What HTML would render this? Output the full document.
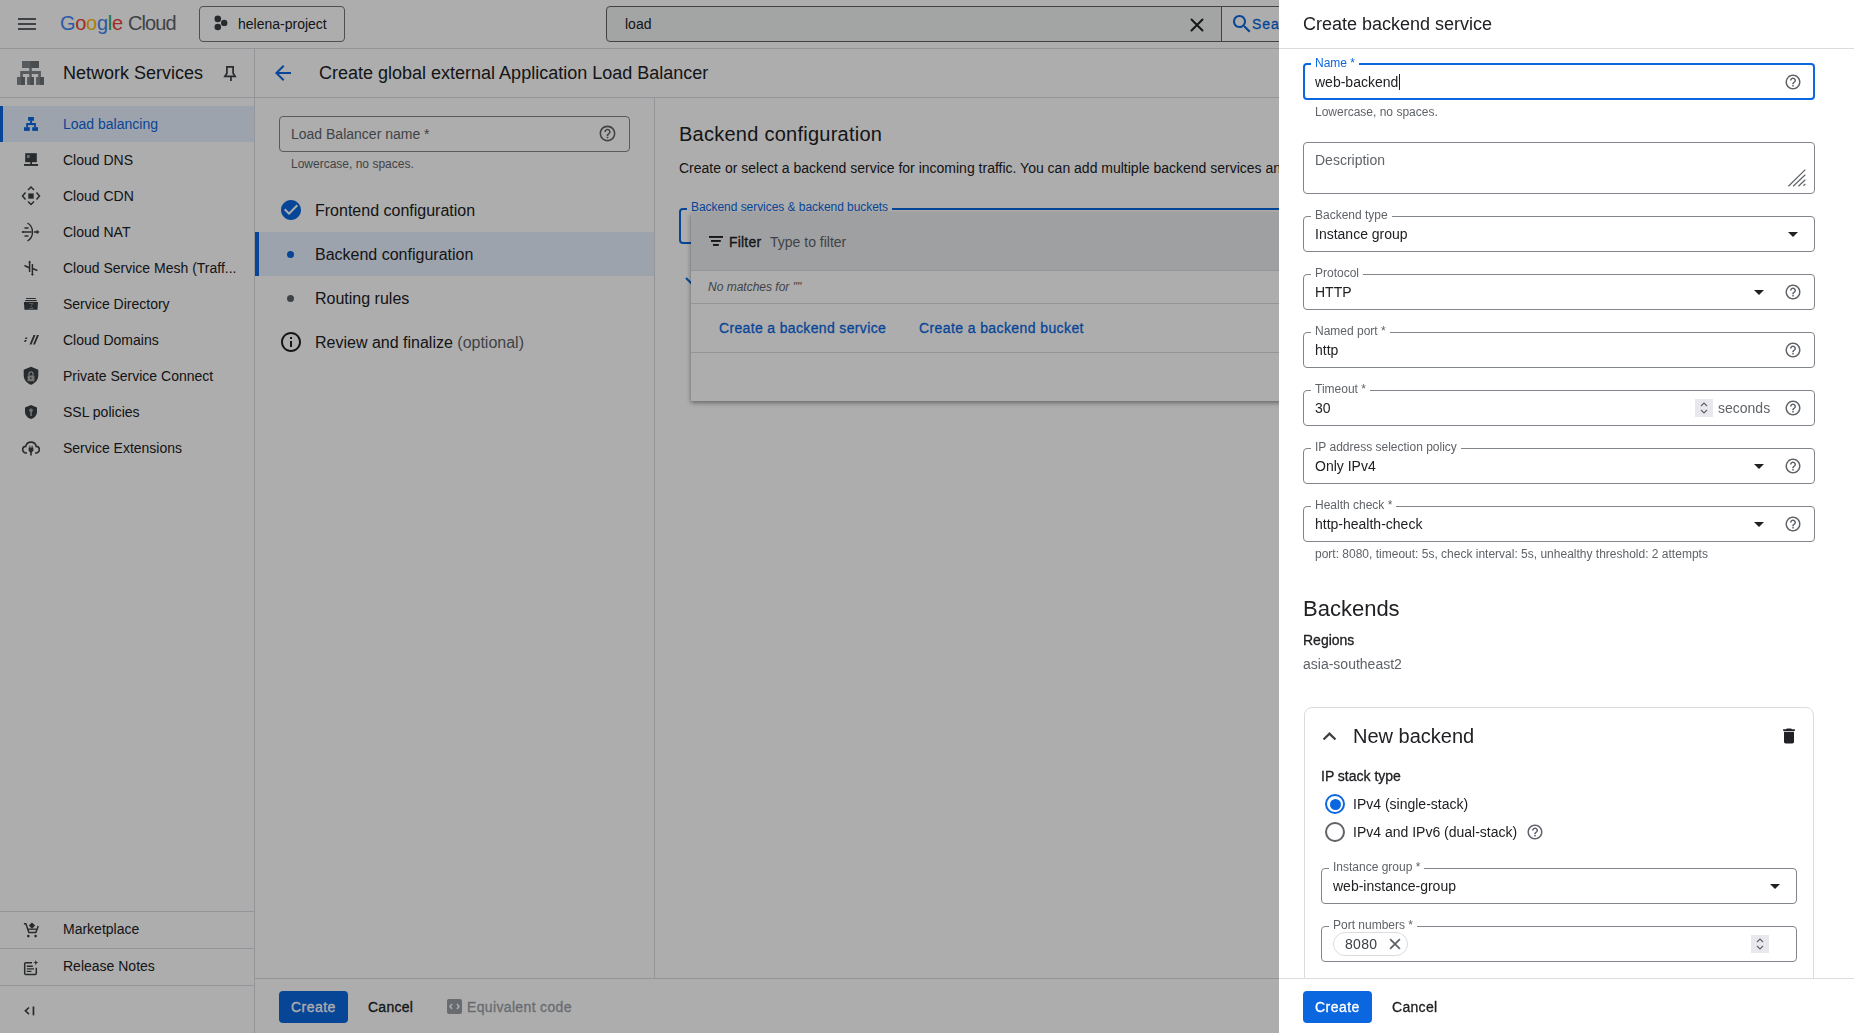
<!DOCTYPE html>
<html><head><meta charset="utf-8">
<style>
*{box-sizing:border-box;margin:0;padding:0}
html,body{width:1854px;height:1033px;overflow:hidden;background:#fff;font-family:"Liberation Sans",sans-serif;color:#202124}
#base{position:absolute;left:0;top:0;width:1854px;height:1033px;background:#fff}
#scrim{position:absolute;left:0;top:0;width:1279px;height:1033px;background:rgba(0,0,0,0.32)}
#panel{position:absolute;left:1279px;top:0;width:575px;height:1033px;background:#fff;overflow:hidden;will-change:transform}
.hl{position:absolute;height:1px;background:#dadce0}
.vl{position:absolute;width:1px;background:#dadce0}
.t{position:absolute;white-space:nowrap;line-height:1}
svg{position:absolute;display:block}
.med{-webkit-text-stroke:0.3px currentColor}
.nav{position:absolute;left:0;width:254px;height:36px}
.nav .tx{position:absolute;left:63px;top:11px;font-size:14px;line-height:14px;color:#202124;white-space:nowrap}
.nav svg{left:21px;top:9px}
.fld{position:absolute;border:1px solid #80868b;border-radius:4px}
.lbl{position:absolute;font-size:12px;line-height:12px;color:#5f6368;background:#fff;padding:0 4px;white-space:nowrap}
.val{position:absolute;font-size:14px;line-height:14px;color:#202124;white-space:nowrap}
</style></head><body>
<div id="base">
  <!-- ===== top bar ===== -->
  <svg style="left:15px;top:12px" width="24" height="24" viewBox="0 0 24 24"><path fill="#5f6368" d="M3 18h18v-2H3v2zm0-5h18v-2H3v2zm0-7v2h18V6H3z"/></svg>
  <div class="t" style="left:60px;top:13px;font-size:20px;letter-spacing:-0.3px"><span style="color:#4285f4">G</span><span style="color:#ea4335">o</span><span style="color:#fbbc04">o</span><span style="color:#4285f4">g</span><span style="color:#34a853">l</span><span style="color:#ea4335">e</span></div><div class="t" style="left:128px;top:13px;font-size:20px;letter-spacing:-0.9px;color:#5f6368">Cloud</div>
  <div style="position:absolute;left:199px;top:6px;width:146px;height:36px;border:1px solid #747775;border-radius:4px"></div>
  <div class="t" style="left:238px;top:17px;font-size:14px;color:#202124">helena-project</div>
  <div style="position:absolute;left:606px;top:6px;width:700px;height:36px;border:1px solid #5f6368;border-radius:4px;background:#f1f3f4"></div>
  <div style="position:absolute;left:1221px;top:7px;width:80px;height:34px;background:#fff;border-left:1px solid #5f6368"></div>
  <div class="t" style="left:625px;top:17px;font-size:14px;color:#202124">load</div>
  <svg style="left:1189px;top:17px" width="16" height="16" viewBox="0 0 16 16"><path fill="none" stroke="#202124" stroke-width="2" stroke-linecap="round" d="M2.5 2.5l11 11M13.5 2.5l-11 11"/></svg>
  <svg style="left:1230px;top:12px" width="24" height="24" viewBox="0 0 24 24"><path fill="#0b67df" d="M15.5 14h-.79l-.28-.27C15.41 12.59 16 11.11 16 9.5 16 5.91 13.09 3 9.5 3S3 5.91 3 9.5 5.91 16 9.5 16c1.61 0 3.09-.59 4.23-1.57l.27.28v.79l5 4.99L20.49 19l-4.99-5zm-6 0C7.01 14 5 11.99 5 9.5S7.01 5 9.5 5 14 7.01 14 9.5 11.99 14 9.5 14z"/></svg>
  <div class="t med" style="left:1252px;top:17px;font-size:14px;letter-spacing:1px;color:#0b67df">Search</div>
  <div class="hl" style="left:0;top:48px;width:1279px"></div>

  <!-- ===== sidebar ===== -->
  <div class="t" style="left:63px;top:64px;font-size:18px;color:#202124">Network Services</div>
  <div class="hl" style="left:0;top:97px;width:1279px"></div>

  <div class="nav" style="top:106px;background:#e8f0fe"><div style="position:absolute;left:0;top:0;width:3px;height:36px;background:#0b67df"></div>
    <div class="tx" style="color:#0b67df">Load balancing</div></div>
  <div class="nav" style="top:142px"><div class="tx">Cloud DNS</div></div>
  <div class="nav" style="top:178px"><div class="tx">Cloud CDN</div></div>
  <div class="nav" style="top:214px"><div class="tx">Cloud NAT</div></div>
  <div class="nav" style="top:250px"><div class="tx">Cloud Service Mesh (Traff...</div></div>
  <div class="nav" style="top:286px"><div class="tx">Service Directory</div></div>
  <div class="nav" style="top:322px"><div class="tx">Cloud Domains</div></div>
  <div class="nav" style="top:358px"><div class="tx">Private Service Connect</div></div>
  <div class="nav" style="top:394px"><div class="tx">SSL policies</div></div>
  <div class="nav" style="top:430px"><div class="tx">Service Extensions</div></div>

  <div class="hl" style="left:0;top:911px;width:254px"></div>
  <div class="nav" style="top:911px"><div class="tx">Marketplace</div></div>
  <div class="hl" style="left:0;top:948px;width:254px"></div>
  <div class="nav" style="top:948px"><div class="tx">Release Notes</div></div>
  <div class="hl" style="left:0;top:985px;width:254px"></div>
<svg style="left:0;top:0" width="254" height="1033" viewBox="0 0 254 1033">
<!-- project -->
<circle cx="217.8" cy="18.9" r="3.3" fill="#3c4043"/><circle cx="217.8" cy="27" r="3.3" fill="#3c4043"/><circle cx="224.2" cy="22.9" r="3.2" fill="#3c4043"/>
<!-- network services -->
<g fill="#80868b"><rect x="22" y="61" width="17" height="7"/><rect x="29.2" y="68" width="2.6" height="3.5"/><rect x="20.2" y="71" width="20.7" height="3"/><rect x="20.2" y="74" width="2.7" height="3.2"/><rect x="29.2" y="74" width="2.6" height="3.2"/><rect x="38.2" y="74" width="2.7" height="3.2"/><rect x="17" y="77" width="7.9" height="7.9"/><rect x="27.1" y="77" width="6.7" height="7.9"/><rect x="36.1" y="77" width="7.8" height="7.9"/></g>
<g fill="#6b7075"><rect x="30.5" y="61" width="8.5" height="7"/><rect x="21" y="77" width="3.9" height="7.9"/><rect x="30.5" y="77" width="3.3" height="7.9"/><rect x="40" y="77" width="3.9" height="7.9"/></g>
<!-- pin -->
<path fill="none" stroke="#3c4043" stroke-width="1.7" d="M226.9 66.9h6.2v6.3l2 3.1h-10.2l2-3.1z"/><rect x="230.1" y="76.5" width="1.7" height="4.5" fill="#3c4043"/>
<!-- load balancing -->
<g fill="#0b67df"><rect x="28.1" y="117" width="5.8" height="3.8"/><rect x="30.1" y="120.5" width="1.9" height="2.8"/><rect x="26.2" y="123" width="9.7" height="2.1"/><rect x="26.2" y="125" width="1.8" height="2.3"/><rect x="34.1" y="125" width="1.8" height="2.3"/><rect x="24" y="127.2" width="5.8" height="3.7"/><rect x="32.2" y="127.2" width="5.8" height="3.7"/></g>
<!-- dns -->
<rect x="25.2" y="153.2" width="11.6" height="9" fill="#3c4043"/><rect x="26.9" y="155" width="2.8" height="3" fill="#9aa0a6"/><rect x="30.3" y="162" width="1.7" height="2.2" fill="#3c4043"/><rect x="24" y="164" width="14" height="1.9" fill="#3c4043"/>
<!-- cdn -->
<rect x="28.3" y="193.4" width="5.4" height="5.3" fill="#3c4043"/>
<path fill="none" stroke="#3c4043" stroke-width="1.5" d="M25.5 192.5l-3 3.5 3 3.5M36.5 192.5l3 3.5-3 3.5M28 190l3-3 3 3M28 201.5l3 3 3-3"/>
<!-- nat -->
<path fill="none" stroke="#3c4043" stroke-width="1.4" d="M27.5 223c3.5 2 5 5.5 5 9s-1.5 7-5 9M22.5 232h9M34 232h3.5M24.5 228h4M24.5 236h4"/>
<path fill="#3c4043" d="M39.5 232l-2.8-2.2v4.4z"/><circle cx="22.8" cy="232" r="1" fill="#3c4043"/>
<!-- mesh -->
<path fill="none" stroke="#3c4043" stroke-width="1.5" d="M29.6 261.5v10.5M32.4 264v11M24.5 265.5l5.1 2.5M32.4 268.5l5 2"/>
<path fill="#3c4043" d="M29.6 260.5l-1.4 2h2.8zM32.4 276l-1.4-2h2.8z"/>
<!-- directory -->
<rect x="26.1" y="298" width="9.7" height="1" fill="#3c4043"/><rect x="25.2" y="300" width="11.6" height="1.2" fill="#3c4043"/><path d="M23.9 302h14.1l-.5 7.7h-13.1z" fill="#3c4043"/><path fill="none" stroke="#8d9196" stroke-width="0.8" d="M29 303.5h4l-2 2.5 2 2.5h-4"/>
<!-- domains -->
<path fill="#3c4043" d="M24.8 340h2l-.9 1.7h-2zM25.6 337.4h2l-.8 1.5h-2zM29.5 344.5h2l4-9.5h-2zM33 344.5h2l4-9.5h-2z"/><path fill="#3c4043" d="M26.5 344.5h2l4-9.5h-2z" opacity="0"/>
<!-- psc -->
<path fill="#3c4043" d="M31 366.8l-7.3 3v5.5c0 4.3 3.1 8.4 7.3 9.4 4.2-1 7.3-5.1 7.3-9.4v-5.5z"/>
<rect x="27.6" y="375.5" width="6.8" height="5.8" rx="0.6" fill="#adadad"/><path fill="none" stroke="#adadad" stroke-width="1.3" d="M29 375.5v-1.6a2 2 0 0 1 4 0v1.6"/><path fill="#3c4043" d="M30.3 377l1.8 1.3-1.8 1.3z"/>
<!-- ssl -->
<path fill="#3c4043" d="M31 405l-6 2.4v4.4c0 3.3 2.5 6.4 6 7.2 3.5-.8 6-3.9 6-7.2v-4.4z"/>
<circle cx="31" cy="410.2" r="1.8" fill="#adadad"/><rect x="30.3" y="411" width="1.5" height="5" fill="#adadad"/>
<!-- extensions -->
<path fill="none" stroke="#3c4043" stroke-width="1.6" d="M27 453h-.8a3.3 3.3 0 0 1-.4-6.6 5.3 5.3 0 0 1 10.4 0 3.3 3.3 0 0 1-.4 6.6H35"/>
<path fill="#3c4043" d="M28.6 447.5h4.8v3.3l-1.6 1.6v3h-1.6v-3l-1.6-1.6z"/><rect x="29.4" y="445.6" width="0.9" height="2.2" fill="#3c4043"/><rect x="31.7" y="445.6" width="0.9" height="2.2" fill="#3c4043"/>
<!-- marketplace -->
<path fill="none" stroke="#3c4043" stroke-width="1.5" stroke-linejoin="round" d="M23.9 923.8h2l3 8.6h7l2.3-6.4"/><path fill="none" stroke="#3c4043" stroke-width="1.3" d="M27.6 929.2h8.9"/>
<circle cx="28.3" cy="936.1" r="1.3" fill="#3c4043"/><circle cx="35.6" cy="936.1" r="1.3" fill="#3c4043"/><path fill="#3c4043" d="M32 922.4l3.2 3.2-3.2 3.2-3.2-3.2z"/>
<!-- release notes -->
<path fill="none" stroke="#3c4043" stroke-width="1.5" stroke-linejoin="round" d="M32 962.8h-6.3a1 1 0 0 0-1 1v9.6a1 1 0 0 0 1 1h9.6a1 1 0 0 0 1-1v-5.6"/><path fill="#3c4043" d="M26.8 965.6h6v1.3h-6zM26.8 968.2h7.2v1.3h-7.2zM26.8 970.8h4.6v1.3h-4.6z"/><path fill="#3c4043" d="M35.8 960l.7 1.9 1.9.7-1.9.7-.7 1.9-.7-1.9-1.9-.7 1.9-.7z"/>
<!-- collapse -->
<path fill="none" stroke="#3c4043" stroke-width="1.6" d="M29 1007.5l-3.6 3.3 3.6 3.3"/><rect x="32.6" y="1006.5" width="1.7" height="8.8" fill="#3c4043"/>
</svg>
  <div class="vl" style="left:254px;top:48px;height:985px"></div>

  <!-- ===== main header ===== -->
  <svg style="left:271px;top:61px" width="24" height="24" viewBox="0 0 24 24"><path fill="#0b67df" d="M20 11H7.83l5.59-5.59L12 4l-8 8 8 8 1.41-1.41L7.83 13H20v-2z"/></svg>
  <div class="t" style="left:319px;top:64px;font-size:18px;color:#202124">Create global external Application Load Balancer</div>

  <!-- LB name -->
  <div class="fld" style="left:279px;top:116px;width:351px;height:36px;border-color:#80868b"></div>
  <div class="t" style="left:291px;top:127px;font-size:14px;color:#5f6368">Load Balancer name *</div>
  <svg style="left:598px;top:124px" width="19" height="19" viewBox="0 0 24 24"><path fill="#5f6368" d="M11 18h2v-2h-2v2zm1-16C6.48 2 2 6.48 2 12s4.48 10 10 10 10-4.48 10-10S17.52 2 12 2zm0 18c-4.41 0-8-3.59-8-8s3.59-8 8-8 8 3.59 8 8-3.59 8-8 8zm0-14c-2.21 0-4 1.79-4 4h2c0-1.1.9-2 2-2s2 .9 2 2c0 2-3 1.75-3 5h2c0-2.25 3-2.5 3-5 0-2.21-1.79-4-4-4z"/></svg>
  <div class="t" style="left:291px;top:158px;font-size:12px;color:#5f6368">Lowercase, no spaces.</div>

  <!-- steps -->
  <svg style="left:279px;top:198px" width="24" height="24" viewBox="0 0 24 24"><path fill="#0b67df" d="M12 2C6.48 2 2 6.48 2 12s4.48 10 10 10 10-4.48 10-10S17.52 2 12 2zm-2 15l-5-5 1.41-1.41L10 14.17l7.59-7.59L19 8l-9 9z"/></svg>
  <div class="t" style="left:315px;top:203px;font-size:16px;color:#202124">Frontend configuration</div>
  <div style="position:absolute;left:255px;top:232px;width:399px;height:44px;background:#e8f0fe"></div>
  <div style="position:absolute;left:255px;top:232px;width:4px;height:44px;background:#0b67df"></div>
  <div style="position:absolute;left:286.5px;top:250.5px;width:7px;height:7px;border-radius:50%;background:#0b67df"></div>
  <div class="t" style="left:315px;top:247px;font-size:16px;color:#202124">Backend configuration</div>
  <div style="position:absolute;left:286.5px;top:294.5px;width:7px;height:7px;border-radius:50%;background:#5f6368"></div>
  <div class="t" style="left:315px;top:291px;font-size:16px;color:#202124">Routing rules</div>
  <svg style="left:279px;top:330px" width="24" height="24" viewBox="0 0 24 24"><path fill="#202124" d="M11 7h2v2h-2zm0 4h2v6h-2zm1-9C6.48 2 2 6.48 2 12s4.48 10 10 10 10-4.48 10-10S17.52 2 12 2zm0 18c-4.41 0-8-3.59-8-8s3.59-8 8-8 8 3.59 8 8-3.59 8-8 8z"/></svg>
  <div class="t" style="left:315px;top:335px;font-size:16px;color:#202124">Review and finalize <span style="color:#5f6368">(optional)</span></div>

  <div class="vl" style="left:654px;top:97px;height:881px"></div>

  <!-- backend config content -->
  <div class="t" style="left:679px;top:124px;font-size:20px;letter-spacing:0.25px;color:#202124">Backend configuration</div>
  <div class="t" style="left:679px;top:161px;font-size:14px;color:#202124">Create or select a backend service for incoming traffic. You can add multiple backend services and backend buckets.</div>
  <div style="position:absolute;left:679px;top:208px;width:700px;height:36px;border:2px solid #0b67df;border-radius:4px"></div>
  <div class="t" style="left:687px;top:201px;font-size:12px;letter-spacing:-0.05px;color:#0b67df;background:#fff;padding:0 4px">Backend services &amp; backend buckets</div>
  <svg style="left:683.5px;top:276px" width="12" height="12" viewBox="0 0 12 12"><path fill="none" stroke="#0b67df" stroke-width="2" d="M2 2l6 6"/></svg>

  <!-- dropdown popup -->
  <div style="position:absolute;left:691px;top:213px;width:700px;height:188px;background:#fff;box-shadow:0 2px 4px rgba(0,0,0,0.3),0 1px 6px rgba(0,0,0,0.15)">
    <div style="position:absolute;left:0;top:0;width:100%;height:58px;background:#eaecef;border-bottom:1px solid #dadce0"></div>
    <svg style="left:0;top:0" width="60" height="60" viewBox="691 213 60 60"><rect x="709" y="236" width="14" height="1.9" fill="#202124"/><rect x="711" y="240" width="9.8" height="1.9" fill="#202124"/><rect x="713" y="244" width="5.8" height="1.9" fill="#202124"/></svg>
    <div class="t med" style="left:38px;top:22px;font-size:14px;letter-spacing:0.2px;color:#202124">Filter</div>
    <div class="t" style="left:79px;top:22px;font-size:14px;color:#5f6368">Type to filter</div>
    <div class="t" style="left:17px;top:68px;font-size:12px;font-style:italic;color:#5f6368">No matches for ""</div>
    <div style="position:absolute;left:0;top:90px;width:100%;height:1px;background:#dadce0"></div>
    <div class="t med" style="left:28px;top:108px;font-size:14px;letter-spacing:0.35px;color:#0b67df">Create a backend service</div>
    <div class="t med" style="left:228px;top:108px;font-size:14px;letter-spacing:0.4px;color:#0b67df">Create a backend bucket</div>
    <div style="position:absolute;left:0;top:139px;width:100%;height:1px;background:#dadce0"></div>
  </div>

  <!-- footer -->
  <div class="hl" style="left:254px;top:978px;width:1025px"></div>
  <div style="position:absolute;left:279px;top:991px;width:69px;height:32px;background:#0b67df;border-radius:4px"></div>
  <div class="t med" style="left:291px;top:1000px;font-size:14px;letter-spacing:0.45px;color:#fff">Create</div>
  <div class="t med" style="left:368px;top:1000px;font-size:14px;letter-spacing:0.25px;color:#202124">Cancel</div>
  <svg style="left:447px;top:999px" width="15" height="15" viewBox="0 0 15 15"><rect x="0" y="0" width="15" height="15" rx="2" fill="#9aa0a6"/><path fill="none" stroke="#fff" stroke-width="1.5" d="M5 5L3 7.5 5 10M10 5l2 2.5-2 2.5"/></svg>
  <div class="t med" style="left:467px;top:1000px;font-size:14px;letter-spacing:0.35px;color:#9aa0a6">Equivalent code</div>
</div>
<div id="scrim"></div>

<div id="panel">
<div class="t" style="left:24px;top:15px;font-size:18px;color:#202124">Create backend service</div>
<div class="hl" style="left:0;top:48px;width:575px"></div>
<div class="fld" style="left:24px;top:63px;width:512px;height:37px;border:2px solid #0b67df"></div>
<div class="lbl" style="left:32px;top:57px;color:#0b67df">Name *</div>
<div class="val" style="left:36px;top:75px">web-backend</div>
<div style="position:absolute;left:120px;top:74px;width:1px;height:16px;background:#202124"></div>
<svg style="left:505.0px;top:73.0px" width="18" height="18" viewBox="0 0 24 24"><path fill="#5f6368" d="M11 18h2v-2h-2v2zm1-16C6.48 2 2 6.48 2 12s4.48 10 10 10 10-4.48 10-10S17.52 2 12 2zm0 18c-4.41 0-8-3.59-8-8s3.59-8 8-8 8 3.59 8 8-3.59 8-8 8zm0-14c-2.21 0-4 1.79-4 4h2c0-1.1.9-2 2-2s2 .9 2 2c0 2-3 1.75-3 5h2c0-2.25 3-2.5 3-5 0-2.21-1.79-4-4-4z"/></svg>
<div class="t" style="left:36px;top:106px;font-size:12px;color:#5f6368">Lowercase, no spaces.</div>
<div class="fld" style="left:24px;top:142px;width:512px;height:52px"></div>
<div class="val" style="left:36px;top:153px;color:#5f6368">Description</div>
<svg style="left:508px;top:168px" width="20" height="20" viewBox="0 0 20 20"><path fill="none" stroke="#5f6368" stroke-width="1.2" d="M1.4 18.2L18.3 1.6M6.1 18.2L18.3 6.8M11.4 18.2L18.3 11.7M16.4 17.8l1.9-1.8"/></svg>
<div class="fld" style="left:24px;top:216px;width:512px;height:36px"></div><div class="lbl" style="left:32px;top:209px">Backend type</div><div class="val" style="left:36px;top:227px">Instance group</div><svg style="left:502px;top:222.0px" width="24" height="24" viewBox="0 0 24 24"><path fill="#202124" d="M7 10l5 5 5-5z"/></svg>
<div class="fld" style="left:24px;top:274px;width:512px;height:36px"></div><div class="lbl" style="left:32px;top:267px">Protocol</div><div class="val" style="left:36px;top:285px">HTTP</div><svg style="left:468px;top:280.0px" width="24" height="24" viewBox="0 0 24 24"><path fill="#202124" d="M7 10l5 5 5-5z"/></svg><svg style="left:505.0px;top:283.0px" width="18" height="18" viewBox="0 0 24 24"><path fill="#5f6368" d="M11 18h2v-2h-2v2zm1-16C6.48 2 2 6.48 2 12s4.48 10 10 10 10-4.48 10-10S17.52 2 12 2zm0 18c-4.41 0-8-3.59-8-8s3.59-8 8-8 8 3.59 8 8-3.59 8-8 8zm0-14c-2.21 0-4 1.79-4 4h2c0-1.1.9-2 2-2s2 .9 2 2c0 2-3 1.75-3 5h2c0-2.25 3-2.5 3-5 0-2.21-1.79-4-4-4z"/></svg>
<div class="fld" style="left:24px;top:332px;width:512px;height:36px"></div><div class="lbl" style="left:32px;top:325px">Named port *</div><div class="val" style="left:36px;top:343px">http</div><svg style="left:505.0px;top:341.0px" width="18" height="18" viewBox="0 0 24 24"><path fill="#5f6368" d="M11 18h2v-2h-2v2zm1-16C6.48 2 2 6.48 2 12s4.48 10 10 10 10-4.48 10-10S17.52 2 12 2zm0 18c-4.41 0-8-3.59-8-8s3.59-8 8-8 8 3.59 8 8-3.59 8-8 8zm0-14c-2.21 0-4 1.79-4 4h2c0-1.1.9-2 2-2s2 .9 2 2c0 2-3 1.75-3 5h2c0-2.25 3-2.5 3-5 0-2.21-1.79-4-4-4z"/></svg>
<div class="fld" style="left:24px;top:390px;width:512px;height:36px"></div><div class="lbl" style="left:32px;top:383px">Timeout *</div><div class="val" style="left:36px;top:401px">30</div><svg style="left:505.0px;top:399.0px" width="18" height="18" viewBox="0 0 24 24"><path fill="#5f6368" d="M11 18h2v-2h-2v2zm1-16C6.48 2 2 6.48 2 12s4.48 10 10 10 10-4.48 10-10S17.52 2 12 2zm0 18c-4.41 0-8-3.59-8-8s3.59-8 8-8 8 3.59 8 8-3.59 8-8 8zm0-14c-2.21 0-4 1.79-4 4h2c0-1.1.9-2 2-2s2 .9 2 2c0 2-3 1.75-3 5h2c0-2.25 3-2.5 3-5 0-2.21-1.79-4-4-4z"/></svg><svg style="left:416px;top:399px" width="18" height="18" viewBox="0 0 18 18"><rect width="18" height="18" fill="#e8e8ee"/><path fill="none" stroke="#5f6368" stroke-width="1.2" d="M6 7l3-3 3 3M6 11l3 3 3-3"/></svg><div class="val" style="left:439px;top:401px;color:#5f6368">seconds</div>
<div class="fld" style="left:24px;top:448px;width:512px;height:36px"></div><div class="lbl" style="left:32px;top:441px">IP address selection policy</div><div class="val" style="left:36px;top:459px">Only IPv4</div><svg style="left:468px;top:454.0px" width="24" height="24" viewBox="0 0 24 24"><path fill="#202124" d="M7 10l5 5 5-5z"/></svg><svg style="left:505.0px;top:457.0px" width="18" height="18" viewBox="0 0 24 24"><path fill="#5f6368" d="M11 18h2v-2h-2v2zm1-16C6.48 2 2 6.48 2 12s4.48 10 10 10 10-4.48 10-10S17.52 2 12 2zm0 18c-4.41 0-8-3.59-8-8s3.59-8 8-8 8 3.59 8 8-3.59 8-8 8zm0-14c-2.21 0-4 1.79-4 4h2c0-1.1.9-2 2-2s2 .9 2 2c0 2-3 1.75-3 5h2c0-2.25 3-2.5 3-5 0-2.21-1.79-4-4-4z"/></svg>
<div class="fld" style="left:24px;top:506px;width:512px;height:36px"></div><div class="lbl" style="left:32px;top:499px">Health check *</div><div class="val" style="left:36px;top:517px">http-health-check</div><svg style="left:468px;top:512.0px" width="24" height="24" viewBox="0 0 24 24"><path fill="#202124" d="M7 10l5 5 5-5z"/></svg><svg style="left:505.0px;top:515.0px" width="18" height="18" viewBox="0 0 24 24"><path fill="#5f6368" d="M11 18h2v-2h-2v2zm1-16C6.48 2 2 6.48 2 12s4.48 10 10 10 10-4.48 10-10S17.52 2 12 2zm0 18c-4.41 0-8-3.59-8-8s3.59-8 8-8 8 3.59 8 8-3.59 8-8 8zm0-14c-2.21 0-4 1.79-4 4h2c0-1.1.9-2 2-2s2 .9 2 2c0 2-3 1.75-3 5h2c0-2.25 3-2.5 3-5 0-2.21-1.79-4-4-4z"/></svg>
<div class="t" style="left:36px;top:548px;font-size:12px;color:#5f6368">port: 8080, timeout: 5s, check interval: 5s, unhealthy threshold: 2 attempts</div>
<div class="t" style="left:24px;top:598px;font-size:22px;color:#202124">Backends</div>
<div class="t med" style="left:24px;top:633px;font-size:14px;color:#202124">Regions</div>
<div class="t" style="left:24px;top:657px;font-size:14px;color:#5f6368">asia-southeast2</div>
<div style="position:absolute;left:25px;top:707px;width:510px;height:400px;border:1px solid #dadce0;border-radius:8px"></div>
<svg style="left:36.5px;top:722.5px" width="27" height="27" viewBox="0 0 24 24"><path fill="#3c4043" d="M12 8l-6 6 1.41 1.41L12 10.83l4.59 4.58L18 14z"/></svg>
<div class="t" style="left:74px;top:726px;font-size:20px;color:#202124">New backend</div>
<svg style="left:500px;top:726px" width="20" height="20" viewBox="0 0 24 24"><path fill="#202124" d="M6 19c0 1.1.9 2 2 2h8c1.1 0 2-.9 2-2V7H6v12zM19 4h-3.5l-1-1h-5l-1 1H5v2h14V4z"/></svg>
<div class="t med" style="left:42px;top:769px;font-size:14px;color:#202124">IP stack type</div>
<div style="position:absolute;left:46px;top:794px;width:20px;height:20px;border:2px solid #0b67df;border-radius:50%"></div><div style="position:absolute;left:50.5px;top:798.5px;width:11px;height:11px;background:#0b67df;border-radius:50%"></div>
<div class="val" style="left:74px;top:797px">IPv4 (single-stack)</div>
<div style="position:absolute;left:46px;top:822px;width:20px;height:20px;border:2px solid #5f6368;border-radius:50%"></div>
<div class="val" style="left:74px;top:825px">IPv4 and IPv6 (dual-stack)</div>
<svg style="left:247.0px;top:823.0px" width="18" height="18" viewBox="0 0 24 24"><path fill="#5f6368" d="M11 18h2v-2h-2v2zm1-16C6.48 2 2 6.48 2 12s4.48 10 10 10 10-4.48 10-10S17.52 2 12 2zm0 18c-4.41 0-8-3.59-8-8s3.59-8 8-8 8 3.59 8 8-3.59 8-8 8zm0-14c-2.21 0-4 1.79-4 4h2c0-1.1.9-2 2-2s2 .9 2 2c0 2-3 1.75-3 5h2c0-2.25 3-2.5 3-5 0-2.21-1.79-4-4-4z"/></svg>
<div class="fld" style="left:42px;top:868px;width:476px;height:36px"></div><div class="lbl" style="left:50px;top:861px">Instance group *</div><div class="val" style="left:54px;top:879px">web-instance-group</div><svg style="left:484px;top:874.0px" width="24" height="24" viewBox="0 0 24 24"><path fill="#202124" d="M7 10l5 5 5-5z"/></svg>
<div class="fld" style="left:42px;top:926px;width:476px;height:36px"></div><div class="lbl" style="left:50px;top:919px">Port numbers *</div><div style="position:absolute;left:54px;top:932px;width:75px;height:24px;border:1px solid #dadce0;border-radius:12px"></div><div class="val" style="left:66px;top:937px;letter-spacing:0.3px;color:#3c4043">8080</div><svg style="left:107px;top:935px" width="18" height="18" viewBox="0 0 24 24"><path fill="#5f6368" stroke="#5f6368" stroke-width="0.6" d="M19 6.41L17.59 5 12 10.59 6.41 5 5 6.41 10.59 12 5 17.59 6.41 19 12 13.41 17.59 19 19 17.59 13.41 12z"/></svg><svg style="left:472px;top:935px" width="18" height="18" viewBox="0 0 18 18"><rect width="18" height="18" fill="#e8e8ee"/><path fill="none" stroke="#5f6368" stroke-width="1.2" d="M6 7l3-3 3 3M6 11l3 3 3-3"/></svg>
<div style="position:absolute;left:0;top:978px;width:575px;height:55px;background:#fff;border-top:1px solid #dadce0"></div>
<div style="position:absolute;left:24px;top:991px;width:69px;height:32px;background:#0b67df;border-radius:4px"></div>
<div class="t med" style="left:36px;top:1000px;font-size:14px;letter-spacing:0.45px;color:#fff">Create</div>
<div class="t med" style="left:113px;top:1000px;font-size:14px;letter-spacing:0.3px;color:#202124">Cancel</div>
</div>
</body></html>
